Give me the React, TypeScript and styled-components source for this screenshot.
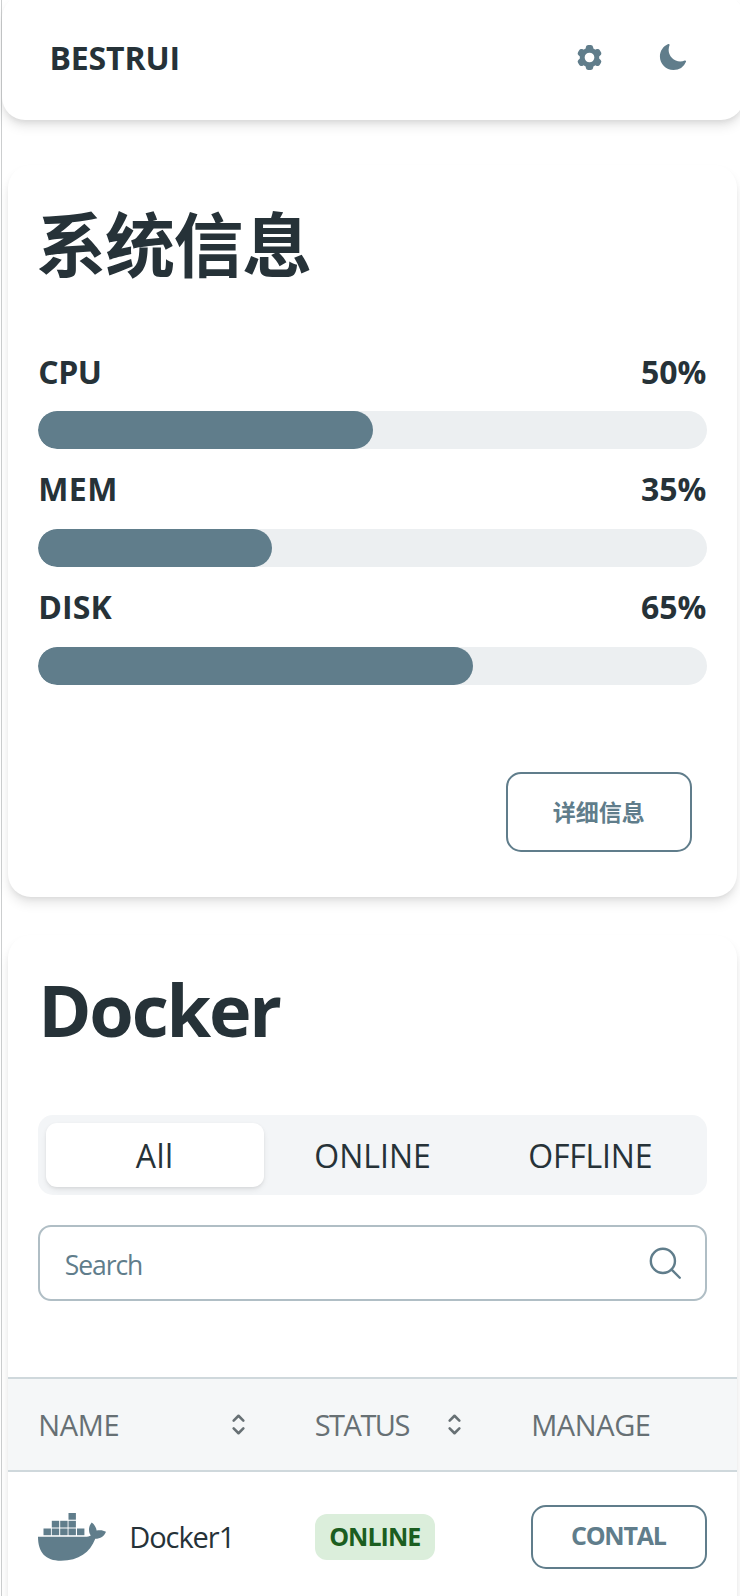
import React from 'react';
import styled, { createGlobalStyle } from 'styled-components';

const ink = '#263238';
const slate = '#607d8b';
const sans = `"Open Sans", "Noto Sans CJK SC", sans-serif`;
const elevation = '0 7.6px 11.4px -1.9px rgba(0,0,0,.1), 0 3.8px 7.6px -3.8px rgba(0,0,0,.1)';

const GlobalStyle = createGlobalStyle`
  * { box-sizing: border-box; }
  body { margin: 0; background: #fff; }
  svg { display: block; flex: none; }
`;

const Page = styled.div`
  width: 740px;
  height: 1596px;
  overflow: hidden;
  padding-left: 1px;
  background: #fff;
  color: ${ink};
  font-family: ${sans};
`;

const Frame = styled.div`
  display: flow-root;
  height: 1596px;
  border-left: 1px solid #cccecf;
`;

const Header = styled.header`
  display: flex;
  align-items: center;
  margin: -5px -3.5px 0 0;
  height: 125.3px;
  padding: 0 55.5px 0 47.5px;
  border-radius: 23px;
  background: #fff;
  box-shadow: ${elevation};
`;

const Brand = styled.span`
  flex: 1;
  font: 700 32px/44px ${sans};
  letter-spacing: -0.15px;
`;

const HeaderActions = styled.div`
  display: flex;
  align-items: center;
  gap: 52.5px;
  color: ${slate};
`;

const Cards = styled.main`
  display: flex;
  flex-direction: column;
  gap: 37.5px;
  padding: 44.7px 2.7px 0 5.7px;
`;

const Card = styled.section<{ $top: number; $bottom: number }>`
  padding: ${p => p.$top}px 0 ${p => p.$bottom}px;
  border-radius: 23px;
  background: #fff;
  box-shadow: ${elevation};
`;

const CardBody = styled.div`
  padding: 0 30.5px;
`;

const Title = styled.h1<{ $size: number; $tracking: number; $inset: number }>`
  margin: 0 0 0 ${p => p.$inset}px;
  font: 700 ${p => p.$size}px/90px ${sans};
  letter-spacing: ${p => p.$tracking}px;
`;

const Metrics = styled.div`
  display: flex;
  flex-direction: column;
  gap: 18.4px;
  margin-top: 60px;
`;

const MetricLabel = styled.div`
  display: flex;
  justify-content: space-between;
  margin-bottom: 17.4px;
  font: 700 32px/44px ${sans};
`;

const MetricName = styled.span<{ $tracking: number }>`
  letter-spacing: ${p => p.$tracking}px;
`;

const MetricValue = styled.span`
  padding-right: 0.5px;
`;

const Track = styled.div`
  height: 38px;
  border-radius: 19px;
  background: #eceff1;
  overflow: hidden;
`;

const Fill = styled.div`
  height: 100%;
  border-radius: 19px;
  background: ${slate};
`;

const CardFooter = styled.div`
  display: flex;
  justify-content: flex-end;
  padding-right: 15px;
  margin-top: 87.2px;
`;

const OutlineButton = styled.button<{ $w: number; $h: number; $size: number; $tracking: number; $pad: string }>`
  display: flex;
  align-items: center;
  justify-content: center;
  width: ${p => p.$w}px;
  height: ${p => p.$h}px;
  padding: ${p => p.$pad};
  border: 2px solid ${slate};
  border-radius: 15px;
  background: transparent;
  color: ${slate};
  font: 700 ${p => p.$size}px/1.4 ${sans};
  letter-spacing: ${p => p.$tracking}px;
`;

const Tabs = styled.div`
  display: grid;
  grid-template-columns: repeat(3, 1fr);
  height: 79.7px;
  margin-top: 61px;
  padding: 7.7px;
  border-radius: 15px;
  background: #f3f5f7;
`;

const Tab = styled.div<{ $active?: boolean; $tracking: number }>`
  display: flex;
  align-items: center;
  justify-content: center;
  padding-top: 2px;
  border-radius: 11px;
  font-size: 32px;
  line-height: 44px;
  letter-spacing: ${p => p.$tracking}px;
  background: ${p => (p.$active ? '#fff' : 'transparent')};
  box-shadow: ${p => (p.$active ? '0 3px 6px -1px rgba(0,0,0,.1), 0 1px 3px rgba(0,0,0,.05)' : 'none')};
`;

const SearchBox = styled.div`
  display: flex;
  align-items: center;
  justify-content: space-between;
  height: 75.8px;
  margin-top: 30.5px;
  padding: 0 20.5px 0 24.5px;
  border: 2px solid #b0bec5;
  border-radius: 13px;
  color: ${slate};
`;

const SearchHint = styled.span`
  padding-top: 4px;
  font-size: 26.5px;
  letter-spacing: -1.05px;
`;

const TableGrid = styled.div`
  display: grid;
  grid-template-columns: 276.5px 216.5px 1fr;
`;

const TableHead = styled(TableGrid)`
  height: 95px;
  margin-top: 75.7px;
  border: solid #cfd8dc;
  border-width: 2px 0;
  background: #f5f7f8;
`;

const HeadCell = styled.div<{ $tracking: number }>`
  display: flex;
  align-items: center;
  justify-content: space-between;
  padding: 0 30.5px;
  color: #677074;
  font-size: 29px;
  letter-spacing: ${p => p.$tracking}px;
`;

const TableRow = styled(TableGrid)`
  height: 130.6px;
`;

const Cell = styled.div`
  display: flex;
  align-items: center;
  padding: 0 30.5px;
`;

const ServiceName = styled.span`
  margin-left: 23px;
  padding-bottom: 1px;
  font-size: 29px;
  letter-spacing: -1.05px;
`;

const Badge = styled.span`
  display: flex;
  align-items: center;
  height: 46px;
  padding: 0 14.5px 2px;
  border-radius: 12px;
  background: #dbeedb;
  color: #1b5e20;
  font-weight: 700;
  font-size: 25px;
  letter-spacing: -0.98px;
`;

const GearIcon = () => (
  <svg width="31" height="31" viewBox="0 0 24 24" fill="currentColor" fillRule="evenodd">
    <path d="M11.078 2.25c-.917 0-1.699.663-1.85 1.567L9.05 4.889c-.02.12-.115.26-.297.348a7.493 7.493 0 00-.986.57c-.166.115-.334.126-.45.083L6.3 5.508a1.875 1.875 0 00-2.282.819l-.922 1.597a1.875 1.875 0 00.432 2.385l.84.692c.095.078.17.229.154.43a7.598 7.598 0 000 1.139c.015.2-.059.352-.153.43l-.841.692a1.875 1.875 0 00-.432 2.385l.922 1.597a1.875 1.875 0 002.282.818l1.019-.382c.115-.043.283-.031.45.082.312.214.641.405.985.57.182.088.277.228.297.35l.178 1.071c.151.904.933 1.567 1.85 1.567h1.844c.916 0 1.699-.663 1.85-1.567l.178-1.072c.02-.12.114-.26.297-.349.344-.165.673-.356.985-.57.167-.114.335-.125.45-.082l1.02.382a1.875 1.875 0 002.28-.819l.923-1.597a1.875 1.875 0 00-.432-2.385l-.84-.692c-.095-.078-.17-.229-.154-.43a7.614 7.614 0 000-1.139c-.016-.2.059-.352.153-.43l.84-.692c.708-.582.891-1.59.433-2.385l-.922-1.597a1.875 1.875 0 00-2.282-.818l-1.02.382c-.114.043-.282.031-.449-.083a7.49 7.49 0 00-.985-.57c-.183-.087-.277-.227-.297-.348l-.179-1.072a1.875 1.875 0 00-1.85-1.567h-1.843zM12 15.75a3.75 3.75 0 100-7.5 3.75 3.75 0 000 7.5z" />
  </svg>
);

const MoonIcon = () => (
  <svg width="31" height="31" viewBox="0 0 24 24" fill="currentColor">
    <path d="M9.528 1.718a.75.75 0 01.162.819A8.97 8.97 0 009 6a9 9 0 009 9 8.97 8.97 0 003.463-.69.75.75 0 01.981.98 10.503 10.503 0 01-9.694 6.46c-5.799 0-10.5-4.701-10.5-10.5 0-4.368 2.667-8.112 6.46-9.694a.75.75 0 01.818.162z" />
  </svg>
);

const SearchIcon = () => (
  <svg width="38.6" height="38.6" viewBox="0 0 24 24" fill="none" stroke="currentColor" strokeWidth="1.5" strokeLinecap="round" strokeLinejoin="round">
    <path d="M21 21l-5.197-5.197m0 0A7.5 7.5 0 105.196 5.196a7.5 7.5 0 0010.607 10.607z" />
  </svg>
);

const SortIcon = () => (
  <svg width="31" height="31" viewBox="0 0 24 24" fill="none" stroke="currentColor" strokeWidth="2" strokeLinecap="round" strokeLinejoin="round">
    <path d="M8.25 15L12 18.75 15.75 15m-7.5-6L12 5.25 15.75 9" />
  </svg>
);

const containers: [number, number][] = [
  [30.5, 0],
  [13.8, 7.8], [22.2, 7.8], [30.5, 7.8],
  [5.5, 15.5], [13.8, 15.5], [22.2, 15.5], [30.5, 15.5], [39, 15.5],
];

const WhaleIcon = () => (
  <svg width="68" height="48" viewBox="0 0 68 48" fill={slate}>
    {containers.map(([x, y]) => (
      <rect key={`${x}-${y}`} x={x} y={y} width="7.4" height="6.7" />
    ))}
    <path d="M0 23.8H47C49.500 23.800 51.500 23.500 52.800 22.600C50.300 19.200 50.200 13.400 53.700 9.600C56.600 11.800 58.300 14.600 58.600 17.600C62 16.700 65.400 17.200 68 18.700C66.300 23.200 62.400 25.500 57.300 25.800C52 39.300 41 47.800 23 47.800C7.500 47.800 0 39.500 0 23.800Z" />
  </svg>
);

const metrics = [
  { name: 'CPU', value: 50, tracking: -0.4 },
  { name: 'MEM', value: 35, tracking: 0.5 },
  { name: 'DISK', value: 65, tracking: 0.1 },
];

export default function App() {
  return (
    <Page>
      <GlobalStyle />
      <Frame>
        <Header>
          <Brand>BESTRUI</Brand>
          <HeaderActions>
            <GearIcon />
            <MoonIcon />
          </HeaderActions>
        </Header>
        <Cards>
          <Card $top={34.6} $bottom={45.6}>
            <CardBody>
              <Title $size={70} $tracking={-1.3} $inset={-2}>系统信息</Title>
              <Metrics>
                {metrics.map(m => (
                  <div key={m.name}>
                    <MetricLabel>
                      <MetricName $tracking={m.tracking}>{m.name}</MetricName>
                      <MetricValue>{m.value}%</MetricValue>
                    </MetricLabel>
                    <Track>
                      <Fill style={{ width: `${m.value}%` }} />
                    </Track>
                  </div>
                ))}
              </Metrics>
              <CardFooter>
                <OutlineButton $w={186.2} $h={80} $size={23} $tracking={0} $pad="1px 0 0">详细信息</OutlineButton>
              </CardFooter>
            </CardBody>
          </Card>
          <Card $top={29.2} $bottom={40}>
            <CardBody>
              <Title $size={72} $tracking={-2.2} $inset={0}>Docker</Title>
              <Tabs>
                <Tab $active $tracking={0.5}>All</Tab>
                <Tab $tracking={0}>ONLINE</Tab>
                <Tab $tracking={-0.2}>OFFLINE</Tab>
              </Tabs>
              <SearchBox>
                <SearchHint>Search</SearchHint>
                <SearchIcon />
              </SearchBox>
            </CardBody>
            <TableHead>
              <HeadCell $tracking={-0.35}>NAME<SortIcon /></HeadCell>
              <HeadCell $tracking={-1.5}>STATUS<SortIcon /></HeadCell>
              <HeadCell $tracking={-0.4}>MANAGE</HeadCell>
            </TableHead>
            <TableRow>
              <Cell>
                <WhaleIcon />
                <ServiceName>Docker1</ServiceName>
              </Cell>
              <Cell>
                <Badge>ONLINE</Badge>
              </Cell>
              <Cell>
                <OutlineButton $w={175.7} $h={64.5} $size={25} $tracking={-1.25} $pad="0 1.5px 2px 0">CONTAL</OutlineButton>
              </Cell>
            </TableRow>
          </Card>
        </Cards>
      </Frame>
    </Page>
  );
}
